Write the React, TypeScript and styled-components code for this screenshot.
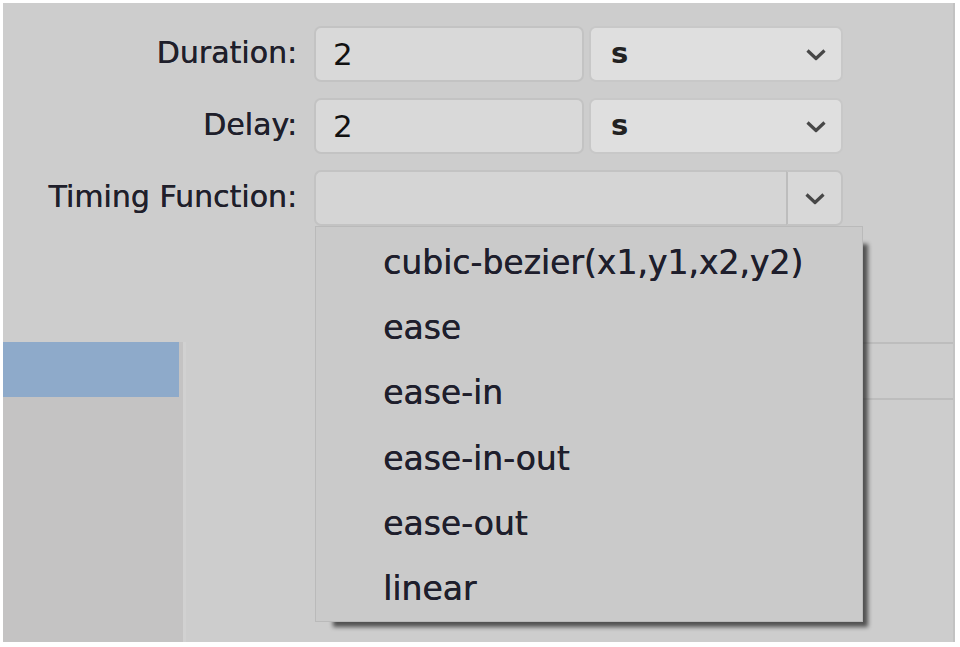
import React from 'react';
import styled, { createGlobalStyle } from 'styled-components';

const GlobalStyle = createGlobalStyle`
  html, body {
    margin: 0;
    padding: 0;
    background: #ffffff;
  }
  body {
    font-family: "DejaVu Sans", Verdana, sans-serif;
  }
`;

const timingOptions = [
  'cubic-bezier(x1,y1,x2,y2)',
  'ease',
  'ease-in',
  'ease-in-out',
  'ease-out',
  'linear',
];

const Chevron: React.FC = () => (
  <svg width="22" height="13" viewBox="0 0 22 13">
    <polyline points="2.5,2.5 11,10.5 19.5,2.5" fill="none" stroke="#474747" strokeWidth="3.2" strokeLinejoin="round" />
  </svg>
);

const App: React.FC = () => {
  return (
    <>
      <GlobalStyle />
      <Page>
        <Frame>
          <Form>
            <Label>Duration:</Label>
            <Fields>
              <TextBox>2</TextBox>
              <SelectBox>
                <span>s</span>
                <Chevron />
              </SelectBox>
            </Fields>

            <Label>Delay:</Label>
            <Fields>
              <TextBox>2</TextBox>
              <SelectBox>
                <span>s</span>
                <Chevron />
              </SelectBox>
            </Fields>

            <Label>Timing Function:</Label>
            <Combo>
              <ComboText />
              <ComboButton>
                <Chevron />
              </ComboButton>
              <Dropdown>
                <MenuList>
                  {timingOptions.map((opt) => (
                    <MenuItem key={opt}>{opt}</MenuItem>
                  ))}
                </MenuList>
              </Dropdown>
            </Combo>
          </Form>

          <Lower>
            <Sidebar>
              <SidebarHeader />
            </Sidebar>
            <Main>
              <Table>
                <TableRow />
              </Table>
            </Main>
          </Lower>
        </Frame>
      </Page>
    </>
  );
};

export default App;

const Page = styled.div`
  width: 960px;
  height: 647px;
  box-sizing: border-box;
  padding: 3px 5px 5px 3px;
  background: #ffffff;
  overflow: hidden;
`;

const Frame = styled.div`
  height: 100%;
  display: flex;
  flex-direction: column;
  background: #cdcdcd;
  border-right: 2px solid #c2c2c2;
  box-sizing: border-box;
`;

const Form = styled.div`
  display: grid;
  grid-template-columns: 294px 529px;
  column-gap: 17px;
  row-gap: 16px;
  grid-auto-rows: 56px;
  padding-top: 23px;
  height: 339px;
  box-sizing: border-box;
`;

const Label = styled.div`
  display: flex;
  align-items: center;
  justify-content: flex-end;
  padding-bottom: 4px;
  font-size: 30px;
  color: #1f1f2b;
  text-shadow: 0.4px 0 0 #1f1f2b;
`;

const Fields = styled.div`
  display: flex;
  gap: 5px;
`;

const TextBox = styled.div`
  width: 270px;
  box-sizing: border-box;
  display: flex;
  align-items: center;
  padding-left: 17px;
  font-size: 31px;
  color: #111;
  background: #d9d9d9;
  border: 2px solid #c3c3c3;
  border-radius: 7px;
`;

const SelectBox = styled.div`
  flex: 1;
  box-sizing: border-box;
  display: flex;
  align-items: center;
  justify-content: space-between;
  padding: 0 14px 0 20px;
  font-size: 29px;
  font-weight: bold;
  color: #222;
  background: #dfdfdf;
  border: 2px solid #c8c8c8;
  border-radius: 7px;

  span {
    padding-bottom: 2px;
  }
`;

const Combo = styled.div`
  position: relative;
  display: flex;
`;

const ComboText = styled.div`
  flex: 1;
  background: #d5d5d5;
  border: 2px solid #c3c3c3;
  border-right: none;
  border-radius: 7px 0 0 7px;
`;

const ComboButton = styled.div`
  width: 53px;
  display: flex;
  align-items: center;
  justify-content: center;
  background: #d8d8d8;
  border: 2px solid #c3c3c3;
  border-left: 2px solid #bdbdbd;
  border-radius: 0 7px 7px 0;
`;

const Dropdown = styled.div`
  position: absolute;
  top: 56px;
  left: 1px;
  width: 548px;
  height: 396px;
  z-index: 10;

  &::before {
    content: '';
    position: absolute;
    top: 18px;
    left: 18px;
    right: -5px;
    bottom: -5px;
    background: rgba(40, 40, 40, 0.75);
    filter: blur(2px);
  }
`;

const MenuList = styled.div`
  position: relative;
  height: 100%;
  box-sizing: border-box;
  padding-top: 3px;
  background: #cacaca;
  border: 1px solid #bababa;
  display: flex;
  flex-direction: column;
`;

const MenuItem = styled.div`
  height: 66px;
  display: flex;
  align-items: center;
  padding-left: 67px;
  font-size: 33px;
  color: #1e1e2c;
  text-shadow: 0.4px 0 0 #1e1e2c;
`;

const Lower = styled.div`
  flex: 1;
  display: flex;
`;

const Sidebar = styled.div`
  width: 180px;
  background: #c4c3c3;
  border-right: 3px solid #d1d1d1;
`;

const SidebarHeader = styled.div`
  height: 55px;
  margin-right: 4px;
  background: #8eaaca;
`;

const Main = styled.div`
  flex: 1;
  padding-left: 150px;
`;

const Table = styled.div`
  border-top: 2px solid #bdbdbd;
`;

const TableRow = styled.div`
  height: 54px;
  border-bottom: 2px solid #bdbdbd;
`;
